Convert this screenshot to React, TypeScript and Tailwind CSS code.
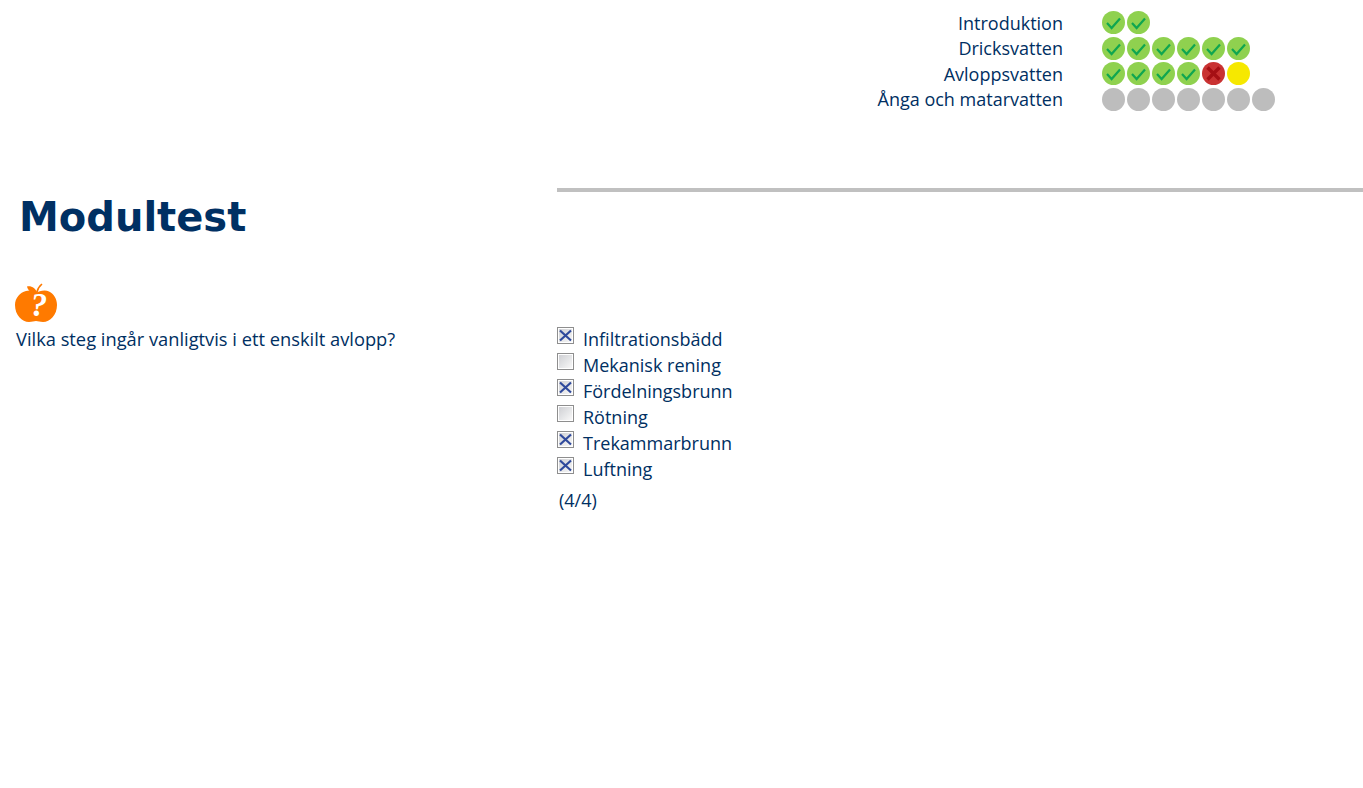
import React from 'react';

type Status = 'ok' | 'fail' | 'current' | 'todo';

const PROGRESS: { name: string; steps: Status[] }[] = [
  { name: 'Introduktion', steps: ['ok', 'ok'] },
  { name: 'Dricksvatten', steps: ['ok', 'ok', 'ok', 'ok', 'ok', 'ok'] },
  { name: 'Avloppsvatten', steps: ['ok', 'ok', 'ok', 'ok', 'fail', 'current'] },
  { name: 'Ånga och matarvatten', steps: ['todo', 'todo', 'todo', 'todo', 'todo', 'todo', 'todo'] },
];

const ANSWERS = [
  { label: 'Infiltrationsbädd', checked: true },
  { label: 'Mekanisk rening', checked: false },
  { label: 'Fördelningsbrunn', checked: true },
  { label: 'Rötning', checked: false },
  { label: 'Trekammarbrunn', checked: true },
  { label: 'Luftning', checked: true },
];

function Dot({ status }: { status: Status }) {
  if (status === 'ok') {
    return (
      <svg width="23" height="23" viewBox="0 0 23 23" className="block">
        <circle cx="11.5" cy="11.5" r="11.5" fill="#8fd14f" />
        <path d="M5 12 L9.6 17 L18 7.5" fill="none" stroke="#0fa650" strokeWidth="2.2" />
      </svg>
    );
  }
  if (status === 'fail') {
    return (
      <svg width="23" height="23" viewBox="0 0 23 23" className="block">
        <circle cx="11.5" cy="11.5" r="11.5" fill="#c93232" />
        <path d="M5.5 5.5 L17.5 17.5 M17.5 5.5 L5.5 17.5" fill="none" stroke="#a50f14" strokeWidth="3.4" />
      </svg>
    );
  }
  return <div className={status === 'current' ? 'w-[23px] h-[23px] rounded-full bg-[#f6e800]' : 'w-[23px] h-[23px] rounded-full bg-[#bdbdbd]'} />;
}

function Checkbox({ checked }: { checked: boolean }) {
  return (
    <svg width="17" height="17" viewBox="0 0 17 17" className="block shrink-0">
      <defs>
        <linearGradient id="boxFill" x1="0" y1="0" x2="1" y2="1">
          <stop offset="0" stopColor="#cfd0d4" />
          <stop offset="1" stopColor="#f8f8f8" />
        </linearGradient>
      </defs>
      <rect x="0.5" y="0.5" width="16" height="16" fill="#fff" stroke="#8e8e8e" />
      <rect x="2" y="2" width="13" height="13" fill="url(#boxFill)" />
      {checked && <path d="M3 3.5 L14 13.5 M14 3.5 L3 13.5" stroke="#2f4a9c" strokeWidth="2.2" fill="none" />}
    </svg>
  );
}

function QuestionApple() {
  return (
    <svg width="44" height="40" viewBox="0 0 44 40" className="block">
      <path
        d="M12 8 C16 6.5 20 8 22 10 C25 8 31 6.5 35 8.5 C40 11 43 16 43 22 C43 32 36 39 29 39 C26 39 24 38 22 38 C20 38 18 39 15 39 C8 39 1 32 1 22 C1 15 6 9.5 12 8 Z"
        fill="#ff7a00"
      />
      <path d="M13 3.5 C17 2.5 22 5 23 10.5 C18 11 14 8 13 3.5 Z" fill="#ff7a00" />
      <path d="M22.5 10 C23.5 6 25.5 3 28 1" stroke="#ff7a00" strokeWidth="1.6" fill="none" />
      <text x="25" y="33" textAnchor="middle" fill="#fff" fontSize="33" fontWeight="700" fontStyle="italic" fontFamily="'Liberation Serif', serif">
        ?
      </text>
    </svg>
  );
}

export default function App() {
  return (
    <div className="min-h-[788px] bg-white text-[18px] leading-[26px] text-[#002f62] font-['Open_Sans',sans-serif]">
      {/* Progress per module */}
      <div className="flex flex-col pt-[10px] h-[188px]">
        {PROGRESS.map((row) => (
          <div key={row.name} className="flex h-[25.5px] items-center">
            <div className="w-[1063px] text-right">{row.name}</div>
            <div className="flex gap-[2px] ml-[39px]">
              {row.steps.map((s, i) => (
                <Dot key={i} status={s} />
              ))}
            </div>
          </div>
        ))}
      </div>

      <div className="flex">
        <h1 className="w-[557px] pl-[19px] pt-[4px] text-[40px] leading-[50px] font-bold text-[#003063] font-['DejaVu_Sans',sans-serif]">
          Modultest
        </h1>
        <div className="flex-1 h-[4px] bg-[#c0c0c0]" />
      </div>

      <div className="flex mt-[41px]">
        <div className="w-[557px] pl-[16px]">
          <div className="-ml-[2px]">
            <QuestionApple />
          </div>
          <p className="mt-[3px] text-[18.3px]">Vilka steg ingår vanligtvis i ett enskilt avlopp?</p>
        </div>
        <div className="pt-[44px]">
          {ANSWERS.map((a) => (
            <div key={a.label} className="flex gap-[9px] h-[26px]">
              <Checkbox checked={a.checked} />
              <span className="-mt-[1px]">{a.label}</span>
            </div>
          ))}
          <div className="pl-[2px] mt-[4px]">(4/4)</div>
        </div>
      </div>
    </div>
  );
}
